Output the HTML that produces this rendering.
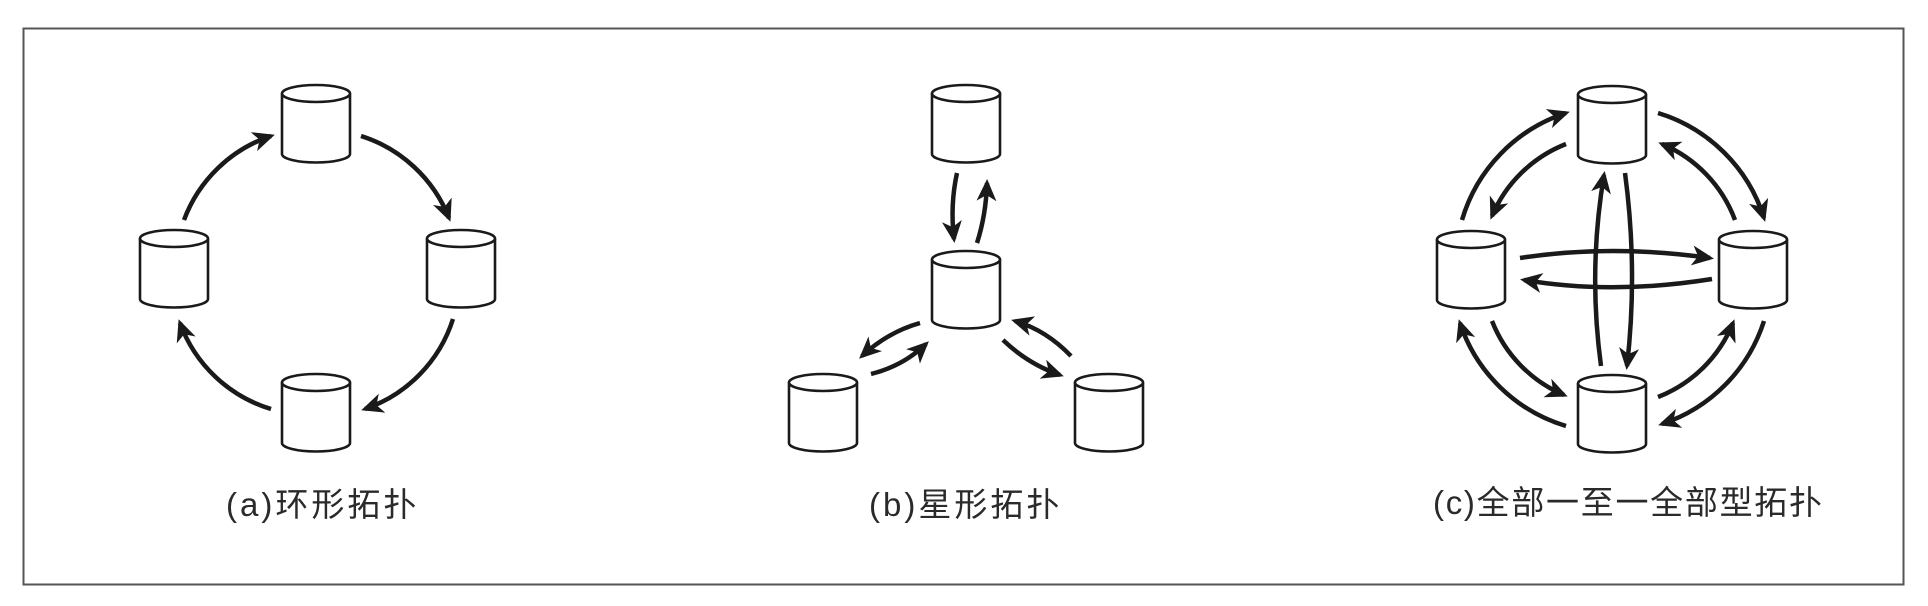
<!DOCTYPE html>
<html><head><meta charset="utf-8"><style>
html,body{margin:0;padding:0;background:#fff;}
svg{display:block;}
text{font-family:"Liberation Sans","Noto Sans CJK SC",sans-serif;font-size:33px;fill:#2a2a2a;letter-spacing:3px;}
</style></head><body>
<svg width="1928" height="606" viewBox="0 0 1928 606" xmlns="http://www.w3.org/2000/svg">
<defs>
<marker id="h" markerUnits="userSpaceOnUse" markerWidth="26" markerHeight="22" refX="18" refY="10" orient="auto">
<path d="M0,0 L22,10 L0,20 L6,10 z" fill="#1a1a1a"/>
</marker>
<g id="cyl" fill="#fff" stroke="#1a1a1a" stroke-width="2.6">
<path d="M0,8.5 L0,69 A34,8.5 0 0 0 68,69 L68,8.5"/>
<ellipse cx="34" cy="8.5" rx="34" ry="8.5"/>
</g>
</defs>
<rect x="23.5" y="28.5" width="1880" height="556" fill="none" stroke="#555" stroke-width="2"/>

<g fill="none" stroke="#1a1a1a" stroke-width="4.5" marker-end="url(#h)">
<path d="M184,220 A140,140 0 0 1 271,136"/>
<path d="M361,136 A140,140 0 0 1 449,218"/>
<path d="M453,319 A140,140 0 0 1 365,409"/>
<path d="M271,409 A140,140 0 0 1 180,323"/>
<path d="M957,173 Q950,205 954,239"/>
<path d="M977,243 Q986,215 987,183"/>
<path d="M920,323 Q888,332 862,356"/>
<path d="M871,374 Q903,366 926,344"/>
<path d="M1003,340 Q1028,364 1060,375"/>
<path d="M1071,356 Q1046,330 1015,321"/>
<path d="M1462,220 A160,160 0 0 1 1566,113"/>
<path d="M1566,144 A133,133 0 0 0 1492,216"/>
<path d="M1658,113 A160,160 0 0 1 1764,218"/>
<path d="M1735,220 A133,133 0 0 0 1662,144"/>
<path d="M1764,321 A160,160 0 0 1 1662,424"/>
<path d="M1658,397 A133,133 0 0 0 1733,323"/>
<path d="M1566,426 A160,160 0 0 1 1460,323"/>
<path d="M1492,321 A133,133 0 0 0 1564,395"/>
<path d="M1520,258 Q1612,244 1710,258"/>
<path d="M1712,279 Q1612,295 1524,280"/>
<path d="M1601,366 Q1588,270 1604,175"/>
<path d="M1625,173 Q1638,270 1627,366"/>
</g>

<use href="#cyl" x="282" y="85"/>
<use href="#cyl" x="140" y="230"/>
<use href="#cyl" x="427" y="230"/>
<use href="#cyl" x="282" y="374"/>

<use href="#cyl" x="932" y="85"/>
<use href="#cyl" x="932" y="251"/>
<use href="#cyl" x="789" y="374"/>
<use href="#cyl" x="1075" y="374"/>

<use href="#cyl" x="1578" y="86"/>
<use href="#cyl" x="1437" y="231"/>
<use href="#cyl" x="1719" y="231"/>
<use href="#cyl" x="1578" y="375"/>

<text x="226" y="516">(a)环形拓扑</text>
<text x="869" y="516">(b)星形拓扑</text>
<text x="1433" y="514" textLength="392" lengthAdjust="spacing">(c)全部一至一全部型拓扑</text>
</svg>
</body></html>
